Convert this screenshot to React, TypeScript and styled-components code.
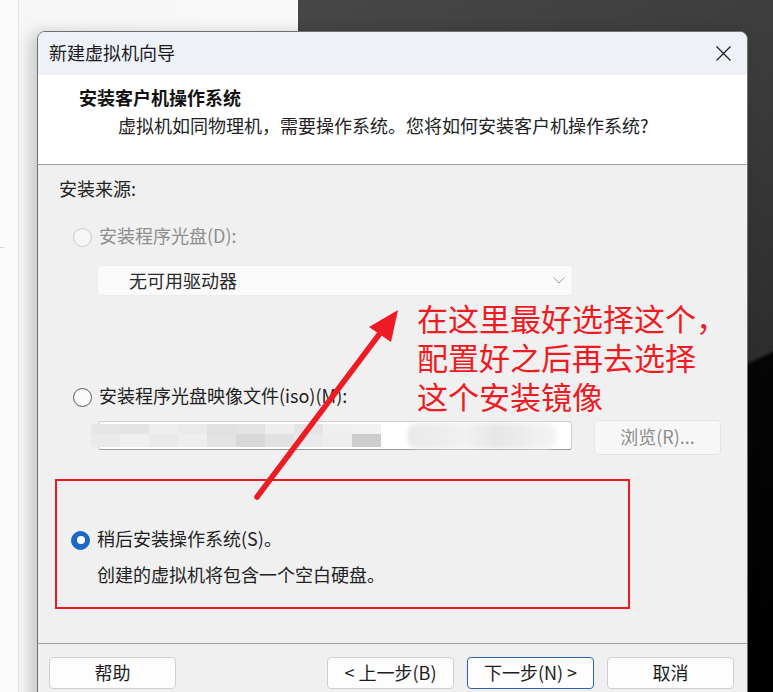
import React from 'react';
import styled, { createGlobalStyle } from 'styled-components';

const GlobalStyle = createGlobalStyle`
  html, body {
    margin: 0;
    padding: 0;
    width: 773px;
    height: 692px;
    overflow: hidden;
  }
  body {
    font-family: "Noto Sans CJK SC", "Noto Sans", sans-serif;
    color: #1c1c1c;
  }
  * { box-sizing: border-box; }
`;

const Desktop = styled.div`
  position: relative;
  width: 773px;
  height: 692px;
  overflow: hidden;
  display: flex;
`;

const LeftPane = styled.div`
  width: 298px;
  height: 100%;
  background: #fafafa;
  display: flex;
`;

const LeftGutter = styled.div`
  width: 19px;
  height: 100%;
  border-right: 1px solid #e3e3e3;
  padding-top: 247px;
`;

const Tick = styled.div`
  width: 4px;
  height: 1px;
  background: #d6d6d6;
`;

const LeftFill = styled.div`
  flex: 1;
  background: linear-gradient(90deg, #f6f6f6 0%, #f9f9f9 100%);
`;

const RightPane = styled.div`
  flex: 1;
  height: 100%;
  background: linear-gradient(
    155deg,
    #474747 0%,
    #3a3a3a 35%,
    #2d2d2d 62.5%,
    #050505 63%,
    #000 100%
  );
`;

const Dialog = styled.div`
  position: absolute;
  left: 37px;
  top: 31px;
  width: 711px;
  height: 680px;
  border: 1px solid #707070;
  border-radius: 8px 8px 0 0;
  background: #f0f0f0;
  box-shadow: -6px 2px 16px rgba(0, 0, 0, 0.2);
  overflow: hidden;
  display: flex;
  flex-direction: column;
`;

const TitleBar = styled.div`
  height: 43px;
  flex: none;
  background: #eef2f8;
  display: flex;
  align-items: center;
  justify-content: space-between;
  padding: 0 16px 0 11px;
`;

const TitleText = styled.div`
  font-size: 18px;
  line-height: 24px;
  color: #1a1a1a;
  margin-top: -4px;
`;

const CloseIcon = styled.svg`
  width: 15px;
  height: 15px;
  display: block;
  margin-top: -1px;
`;

const Header = styled.div`
  height: 90px;
  flex: none;
  background: #ffffff;
  border-bottom: 1px solid #a0a0a0;
  padding: 10px 0 0 41px;
`;

const Heading = styled.div`
  font-size: 18px;
  line-height: 24px;
  font-weight: 700;
  color: #111;
`;

const SubHeading = styled.div`
  margin: 4px 0 0 39px;
  font-size: 18px;
  line-height: 24px;
  color: #222;
`;

const Body = styled.div`
  height: 478px;
  flex: none;
  padding: 11px 0 0 21px;
  display: flex;
  flex-direction: column;
  align-items: flex-start;
`;

const Label = styled.div`
  font-size: 18px;
  line-height: 24px;
  color: #222;
`;

const RadioRow = styled.div<{ $top: number }>`
  margin: ${(p) => p.$top}px 0 0 14px;
  height: 24px;
  display: flex;
  align-items: center;
`;

const RadioDot = styled.span<{ $state: 'disabled' | 'normal' | 'checked' }>`
  width: 19px;
  height: 19px;
  border-radius: 50%;
  flex: none;
  display: flex;
  align-items: center;
  justify-content: center;
  border: 1px solid
    ${(p) =>
      p.$state === 'disabled' ? '#c9c9c9' : p.$state === 'normal' ? '#5c5c5c' : '#1b68c4'};
  background: ${(p) =>
    p.$state === 'disabled' ? '#f6f6f6' : p.$state === 'normal' ? '#fbfbfb' : '#1b68c4'};
  &::after {
    content: '';
    width: 8px;
    height: 8px;
    border-radius: 50%;
    background: #ffffff;
    display: ${(p) => (p.$state === 'checked' ? 'block' : 'none')};
  }
`;

const RadioLabel = styled.span<{ $disabled?: boolean }>`
  margin-left: 7px;
  padding-bottom: 4px;
  font-size: 18px;
  line-height: 24px;
  color: ${(p) => (p.$disabled ? '#8e8e8e' : '#1f1f1f')};
  white-space: nowrap;
`;

const Select = styled.div`
  margin: 17px 0 0 39px;
  width: 474px;
  height: 29px;
  background: #fafafa;
  border-radius: 3px;
  box-shadow: 0 0 0 1px #ececec;
  display: flex;
  align-items: center;
  justify-content: space-between;
  padding: 0 7px 0 31px;
`;

const SelectText = styled.span`
  font-size: 18px;
  line-height: 24px;
  color: #2a2a2a;
  margin-top: -2px;
`;

const Chevron = styled.svg`
  width: 12px;
  height: 7px;
  display: block;
`;

const InputRow = styled.div`
  margin: 11px 0 0 39px;
  display: flex;
  align-items: flex-start;
`;

const PathInput = styled.div`
  margin-top: 1px;
  width: 474px;
  height: 29px;
  background: #ffffff;
  border: 1px solid #cdcdcd;
  border-bottom-color: #9a9a9a;
  border-radius: 3px;
  display: flex;
  align-items: center;
`;

const Mosaic = styled.div`
  margin-left: -8px;
  display: grid;
  grid-template-columns: repeat(10, 29px);
  grid-template-rows: 10px 13px;
`;

const MosaicCell = styled.div<{ $shade: string }>`
  background: ${(p) => p.$shade};
`;

const Smudge = styled.div`
  margin-left: 26px;
  width: 150px;
  height: 26px;
  border-radius: 12px;
  background: linear-gradient(90deg, #e9e9e9, #f1f1f1 40%, #e6e6e6 60%, #f4f4f4);
  filter: blur(2px);
`;

const Button = styled.div<{ $disabled?: boolean; $focused?: boolean }>`
  width: 127px;
  height: 32px;
  border-radius: 4px;
  border: 1px solid ${(p) => (p.$focused ? '#2a64b0' : p.$disabled ? '#e4e4e4' : '#cfcfcf')};
  background: ${(p) => (p.$disabled ? '#f7f7f7' : '#fdfdfd')};
  display: flex;
  align-items: center;
  justify-content: center;
  padding-bottom: 3px;
  font-size: 18px;
  line-height: 24px;
  color: ${(p) => (p.$disabled ? '#8e8e8e' : '#1c1c1c')};
  white-space: nowrap;
`;

const BrowseButton = styled(Button)`
  margin-left: 22px;
  height: 35px;
`;

const RedBox = styled.div`
  margin: 24px 0 0 -4px;
  width: 575px;
  height: 130px;
  border: 2px solid #ed1c24;
  padding-top: 47px;
  display: flex;
  flex-direction: column;
  align-items: flex-start;
`;

const Description = styled.div`
  margin: 10px 0 0 40px;
  font-size: 18px;
  line-height: 24px;
  color: #222;
`;

const Footer = styled.div`
  flex: none;
  border-top: 1px solid #a0a0a0;
  padding: 13px 13px 0 11px;
  display: flex;
  justify-content: space-between;
`;

const ButtonGroup = styled.div`
  display: flex;
  gap: 13px;
`;

const Annotation = styled.div`
  position: absolute;
  left: 417px;
  top: 298px;
  font-family: "Noto Sans CJK SC", sans-serif;
  font-size: 31px;
  line-height: 39px;
  color: #ed1c24;
  white-space: pre;
`;

const ArrowLayer = styled.svg`
  position: absolute;
  left: 0;
  top: 0;
  width: 773px;
  height: 692px;
  pointer-events: none;
`;

const row1 = ['#e6e6e6', '#e4e4e4', '#eeeeee', '#eaeaea', '#e1e1e1', '#e3e3e3', '#eeeeee', '#e4e4e4', '#efefef', '#f2f2f2'];
const row2 = ['#eaeaea', '#f0f0f0', '#e9e9e9', '#eeeeee', '#e3e3e3', '#d8d8d8', '#e1e1e1', '#eaeaea', '#eeeeee', '#cdcdcd'];

export default function App() {
  return (
    <>
      <GlobalStyle />
      <Desktop>
        <LeftPane>
          <LeftGutter>
            <Tick />
          </LeftGutter>
          <LeftFill />
        </LeftPane>
        <RightPane />

        <Dialog>
          <TitleBar>
            <TitleText>新建虚拟机向导</TitleText>
            <CloseIcon viewBox="0 0 15 15">
              <path d="M0.5 0.5 L14.5 14.5 M14.5 0.5 L0.5 14.5" stroke="#1a1a1a" strokeWidth="1.2" fill="none" />
            </CloseIcon>
          </TitleBar>

          <Header>
            <Heading>安装客户机操作系统</Heading>
            <SubHeading>虚拟机如同物理机，需要操作系统。您将如何安装客户机操作系统?</SubHeading>
          </Header>

          <Body>
            <Label>安装来源:</Label>

            <RadioRow $top={25}>
              <RadioDot $state="disabled" />
              <RadioLabel $disabled>安装程序光盘(D):</RadioLabel>
            </RadioRow>

            <Select>
              <SelectText>无可用驱动器</SelectText>
              <Chevron viewBox="0 0 12 7">
                <polyline points="0.5,0.5 6,6 11.5,0.5" stroke="#9c9c9c" strokeWidth="1" fill="none" />
              </Chevron>
            </Select>

            <RadioRow $top={90}>
              <RadioDot $state="normal" />
              <RadioLabel>安装程序光盘映像文件(iso)(M):</RadioLabel>
            </RadioRow>

            <InputRow>
              <PathInput>
                <Mosaic>
                  {row1.map((c, i) => (
                    <MosaicCell key={`a${i}`} $shade={c} />
                  ))}
                  {row2.map((c, i) => (
                    <MosaicCell key={`b${i}`} $shade={c} />
                  ))}
                </Mosaic>
                <Smudge />
              </PathInput>
              <BrowseButton $disabled>浏览(R)...</BrowseButton>
            </InputRow>

            <RedBox>
              <RadioRow $top={0}>
                <RadioDot $state="checked" />
                <RadioLabel>稍后安装操作系统(S)。</RadioLabel>
              </RadioRow>
              <Description>创建的虚拟机将包含一个空白硬盘。</Description>
            </RedBox>
          </Body>

          <Footer>
            <Button>帮助</Button>
            <ButtonGroup>
              <Button>&lt; 上一步(B)</Button>
              <Button $focused>下一步(N) &gt;</Button>
              <Button>取消</Button>
            </ButtonGroup>
          </Footer>
        </Dialog>

        <Annotation>{'在这里最好选择这个，\n配置好之后再去选择\n这个安装镜像'}</Annotation>

        <ArrowLayer viewBox="0 0 773 692">
          <line x1="257" y1="497" x2="381" y2="332" stroke="#ed1c24" strokeWidth="5.5" strokeLinecap="round" />
          <polygon points="398,310 369,327 391,342" fill="#ed1c24" />
        </ArrowLayer>
      </Desktop>
    </>
  );
}
